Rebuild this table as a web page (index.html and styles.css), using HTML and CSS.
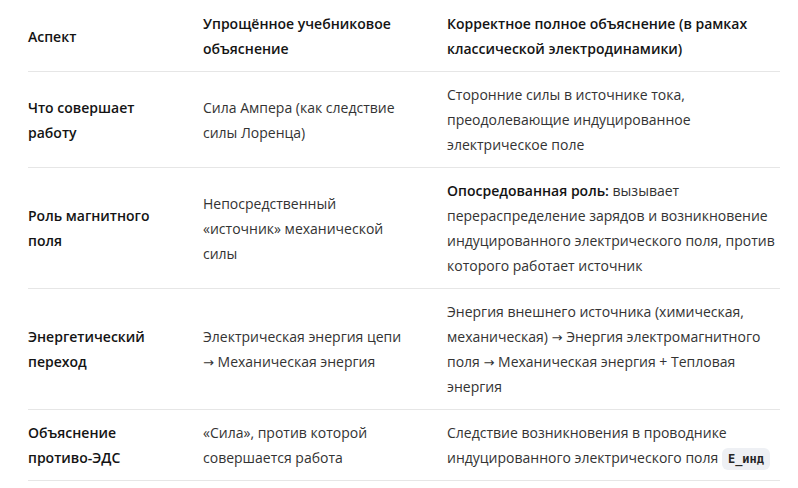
FILE: index.html
```html
<!DOCTYPE html>
<html lang="ru">
<head>
<meta charset="utf-8">
<link rel="stylesheet" href="styles.css">
</head>
<body>
<table class="cmp">
  <thead>
    <tr>
      <th class="c1">Аспект</th>
      <th class="c2">Упрощённое учебниковое<br>объяснение</th>
      <th class="c3">Корректное полное объяснение (в рамках<br>классической электродинамики)</th>
    </tr>
  </thead>
  <tbody>
    <tr>
      <td class="c1"><b>Что совершает<br>работу</b></td>
      <td class="c2">Сила Ампера (как следствие<br>силы Лоренца)</td>
      <td class="c3">Сторонние силы в источнике тока,<br>преодолевающие индуцированное<br>электрическое поле</td>
    </tr>
    <tr>
      <td class="c1"><b>Роль магнитного<br>поля</b></td>
      <td class="c2">Непосредственный<br>«источник» механической<br>силы</td>
      <td class="c3"><b>Опосредованная роль:</b> вызывает<br>перераспределение зарядов и возникновение<br>индуцированного электрического поля, против<br>которого работает источник</td>
    </tr>
    <tr>
      <td class="c1"><b>Энергетический<br>переход</b></td>
      <td class="c2">Электрическая энергия цепи<br><span class="arr">→</span> Механическая энергия</td>
      <td class="c3">Энергия внешнего источника (химическая,<br>механическая) <span class="arr">→</span> Энергия электромагнитного<br>поля <span class="arr">→</span> Механическая энергия + Тепловая<br>энергия</td>
    </tr>
    <tr>
      <td class="c1"><b>Объяснение<br>противо-ЭДС</b></td>
      <td class="c2">«Сила», против которой<br>совершается работа</td>
      <td class="c3">Следствие возникновения в проводнике<br>индуцированного электрического поля <code class="chip">E_инд</code></td>
    </tr>
  </tbody>
</table>
</body>
</html>
```
FILE: styles.css
```css
html, body {
  margin: 0;
  padding: 0;
  background: #ffffff;
}
body {
  padding: 1px 18px 0 28px;
  font-family: "Open Sans", "Noto Sans", sans-serif;
  font-size: 14px;
  line-height: 25px;
  color: #333333;
}
.cmp {
  border-collapse: collapse;
  width: 752px;
  table-layout: fixed;
}
.cmp th, .cmp td {
  text-align: left;
  vertical-align: middle;
  padding: 10px 0;
  border-bottom: 1px solid #e6e6e6;
  white-space: nowrap;
}
.cmp th {
  font-weight: 600;
  color: #141414;
}
.cmp b {
  font-weight: 600;
  color: #141414;
}
.c1 { width: 175px; }
.c2 { width: 244px; }
.c3 { width: 333px; }
.arr {
  font-family: "DejaVu Sans", sans-serif;
  font-size: 13px;
  line-height: 0;
}
.chip {
  font-family: "DejaVu Sans Mono", "Liberation Mono", monospace;
  font-size: 12px;
  line-height: 0;
  font-weight: 600;
  color: #262626;
  background: #eef0f4;
  border-radius: 6px;
  padding: 4px 6px;
}
```
